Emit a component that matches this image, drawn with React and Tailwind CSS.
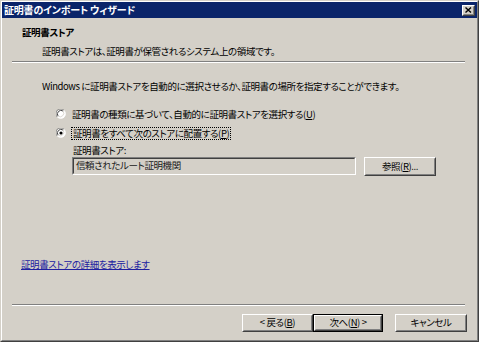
import React from "react";

const raised =
  "border border-t-white border-l-white border-r-[#404040] border-b-[#404040]";
const raisedInner =
  "border border-t-[#d4d0c8] border-l-[#d4d0c8] border-r-[#808080] border-b-[#808080]";

function Button({ children, def, className = "" }) {
  const inner = (
    <div className={`${raised} h-full`}>
      <div className={`${raisedInner} h-full flex items-center justify-center leading-none`}>
        {children}
      </div>
    </div>
  );
  if (def) {
    return <div className={`border border-black h-[18px] ${className}`}>{inner}</div>;
  }
  return <div className={`h-[18px] ${className}`}>{inner}</div>;
}

function Radio({ checked }) {
  return (
    <svg width="10" height="10" viewBox="0 0 12 12" className="shrink-0">
      <circle cx="6" cy="6" r="5.5" fill="#ffffff" />
      <path d="M1.5 9.5 A5.5 5.5 0 0 1 9.5 1.5" fill="none" stroke="#808080" strokeWidth="1.2" />
      <path d="M2.5 8.5 A4.3 4.3 0 0 1 8.5 2.5" fill="none" stroke="#404040" strokeWidth="1.2" />
      <path d="M9.5 1.5 A5.5 5.5 0 0 1 1.5 9.5" fill="none" stroke="#ffffff" strokeWidth="1" />
      <path d="M8.5 2.5 A4.3 4.3 0 0 1 2.5 8.5" fill="none" stroke="#d4d0c8" strokeWidth="1" />
      {checked && <circle cx="6" cy="6" r="1.9" fill="#000000" />}
    </svg>
  );
}

function CloseBtn() {
  return (
    <div className={`${raised} w-[13px] h-[11px] bg-[#d4d0c8]`}>
      <div className={`${raisedInner} w-full h-full flex items-center justify-center`}>
        <svg width="7" height="6" viewBox="0 0 7 6">
          <path d="M0.5 0.5 L6 5.5 M6 0.5 L0.5 5.5" stroke="#000" strokeWidth="1.4" />
        </svg>
      </div>
    </div>
  );
}

function Sep() {
  return <div className="ml-[10px] w-[453px] h-[2px] border-t border-t-[#808080] border-b border-b-white" />;
}

export default function App() {
  return (
    <div className="w-[479px] h-[342px] bg-[#d4d0c8] border border-t-[#d4d0c8] border-l-[#d4d0c8] border-r-[#404040] border-b-[#404040] font-['Noto_Sans_CJK_JP','Noto_Sans',sans-serif] [font-feature-settings:'palt'] text-[9.5px] tracking-[-0.4px] text-black overflow-hidden">
      <div className="h-full border border-t-white border-l-white border-r-[#808080] border-b-[#808080] flex flex-col">
        <div className="h-[16px] bg-[#0a246a] flex items-center justify-between px-[2px] shrink-0">
          <span className="text-white font-bold text-[10px] tracking-[-0.2px] leading-[16px]">
            証明書のインポート ウィザード
          </span>
          <CloseBtn />
        </div>

        <div className="mt-[7px] pl-[20px] h-[14px] leading-[14px] font-bold">証明書ストア</div>
        <div className="mt-[5px] pl-[40px] h-[14px] leading-[14px]">
          証明書ストアは、証明書が保管されるシステム上の領域です。
        </div>
        <div className="mt-[3px]">
          <Sep />
        </div>

        <div className="mt-[16px] pl-[40px] h-[14px] leading-[14px]">
          Windows に証明書ストアを自動的に選択させるか、証明書の場所を指定することができます。
        </div>

        <div className="mt-[14px] pl-[54px] h-[14px] flex items-center gap-[5px]">
          <Radio />
          <span className="leading-[14px] pl-[1px]">
            証明書の種類に基づいて、自動的に証明書ストアを選択する(<span className="underline">U</span>)
          </span>
        </div>
        <div className="mt-[5px] pl-[54px] h-[14px] flex items-center gap-[5px]">
          <Radio checked />
          <span className="leading-[11px] border border-dotted border-black px-[1px]">
            証明書をすべて次のストアに配置する(<span className="underline">P</span>)
          </span>
        </div>

        <div className="mt-[3px] pl-[71px] h-[14px] leading-[14px]">証明書ストア:</div>
        <div className="pl-[70px] flex items-start gap-[8px]">
          <div className="w-[284px] h-[18px] border border-t-[#808080] border-l-[#808080] border-r-white border-b-white">
            <div className="h-full border border-t-[#404040] border-l-[#404040] border-r-[#d4d0c8] border-b-[#d4d0c8] flex items-center pl-[2px] leading-none text-[#202020]">
              信頼されたルート証明機関
            </div>
          </div>
          <Button className="w-[72px] !h-[19px]">
            参照(<span className="underline">R</span>)...
          </Button>
        </div>

        <div className="mt-[81px] pl-[19px] h-[14px] leading-[14px]">
          <span className="text-[#2020a0] underline">証明書ストアの詳細を表示します</span>
        </div>

        <div className="mt-[33px]">
          <Sep />
        </div>

        <div className="mt-[8px] pl-[240px] flex items-start">
          <Button className="w-[71px]">
            &lt; 戻る(<span className="underline">B</span>)
          </Button>
          <Button def className="w-[70px]">
            次へ(<span className="underline">N</span>) &gt;
          </Button>
          <Button className="w-[72px] ml-[12px]">キャンセル</Button>
        </div>
      </div>
    </div>
  );
}
